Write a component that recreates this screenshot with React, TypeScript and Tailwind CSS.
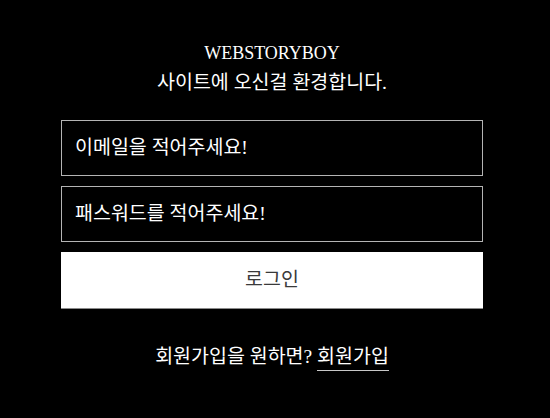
export default function App() {
  return (
    <div
      className="min-h-[418px] w-full bg-black text-white"
      style={{ fontFamily: '"Liberation Serif", "Noto Sans CJK KR", serif' }}
    >
      <div className="w-[544px] pt-[39px] flex flex-col items-center">
        <div className="text-center leading-[29px]">
          <p className="text-[18px]">WEBSTORYBOY</p>
          <p className="text-[19.5px]">사이트에 오신걸 환경합니다.</p>
        </div>

        <form className="mt-[23px] w-[422px] flex flex-col gap-[10px]" onSubmit={e => e.preventDefault()}>
          <input
            type="email"
            placeholder="이메일을 적어주세요!"
            className="h-[56px] w-full border border-[#b4b4b4] bg-transparent px-[13px] text-[19.5px] text-white placeholder:text-white focus:outline-none"
          />
          <input
            type="password"
            placeholder="패스워드를 적어주세요!"
            className="h-[56px] w-full border border-[#b4b4b4] bg-transparent px-[13px] text-[19.5px] text-white placeholder:text-white focus:outline-none"
          />
          <button
            type="submit"
            className="h-[57px] w-full bg-white border-b border-[#8a8a8a] text-[19.5px] text-[#3a3a3a]"
          >
            로그인
          </button>
        </form>

        <p className="mt-[33px] text-[19.5px] leading-[29px] text-center">
          회원가입을 원하면?{' '}
          <a href="#" className="inline-block leading-[26px] border-b border-[#c8c8c8]">
            회원가입
          </a>
        </p>
      </div>
    </div>
  );
}
